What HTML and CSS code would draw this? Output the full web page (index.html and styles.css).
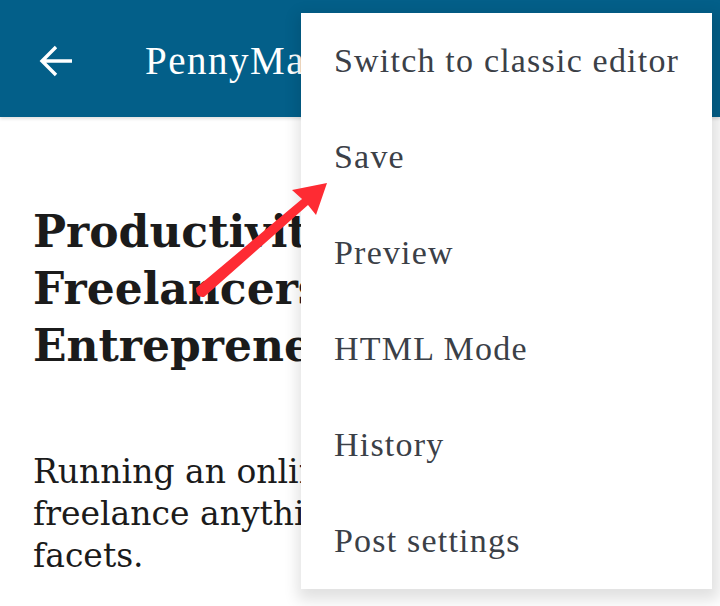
FILE: index.html
```html
<!DOCTYPE html>
<html lang="en">
<head>
<meta charset="UTF-8">
<title>Editor</title>
<link rel="stylesheet" href="styles.css">
</head>
<body>
    <div class="topbar">
        <svg class="back" width="34" height="34" viewBox="0 0 34 34">
            <path d="M33 17H3M17 3L3 17L17 31" fill="none" stroke="#fff" stroke-width="3.4"/>
        </svg>
        <div class="site">PennyMatters</div>
    </div>

    <div class="post">
        <h1>Productivity Tools for<br>Freelancers and<br>Entrepreneurs</h1>
        <p>Running an online business or trying to<br>freelance anything is a challenge with many<br>facets.</p>
    </div>

    <ul class="menu">
        <li>Switch to classic editor</li>
        <li>Save</li>
        <li>Preview</li>
        <li>HTML Mode</li>
        <li>History</li>
        <li>Post settings</li>
    </ul>

    <svg class="pointer" width="720" height="606" viewBox="0 0 720 606">
        <path d="M196 288 L302 199 L292 190 L327 183 L316 215 L308 205 L204 297 Q196 298 196 288 Z" fill="#fe2b33"/>
    </svg>
</body>
</html>
```

FILE: styles.css
```css
body {
    margin: 0;
    background: #fff;
    width: 720px;
    height: 606px;
    overflow: hidden;
    position: relative;
}

.topbar {
    height: 117px;
    background: #035f89;
    display: flex;
    align-items: center;
    padding-left: 39px;
    box-shadow: 0 2px 3px rgba(0, 0, 0, 0.12);
}

.back {
    margin-top: 4px;
}

.site {
    margin-left: 72px;
    margin-top: 4px;
    font-family: "Liberation Serif", serif;
    font-size: 39px;
    letter-spacing: 1.5px;
    color: #fff;
}

.post {
    width: 700px;
    padding-left: 33px;
    box-sizing: border-box;
    overflow: hidden;
    white-space: nowrap;
    color: #1b1b1b;
    font-family: "DejaVu Serif", serif;
}

.post h1 {
    margin: 86px 0 0;
    font-size: 44px;
    line-height: 57px;
}

.post p {
    margin: 77px 0 0;
    font-size: 33px;
    line-height: 42px;
}

.menu {
    position: absolute;
    left: 301px;
    top: 13px;
    width: 411px;
    margin: 0;
    padding: 0;
    list-style: none;
    background: #fff;
    box-shadow: 2px 6px 14px 5px rgba(0, 0, 0, 0.12);
}

.menu li {
    height: 96px;
    display: flex;
    align-items: center;
    padding-left: 33px;
    font-family: "Liberation Serif", serif;
    font-size: 34px;
    letter-spacing: 1.2px;
    color: #3b4047;
}

.pointer {
    position: absolute;
    left: 0;
    top: 0;
}
```
